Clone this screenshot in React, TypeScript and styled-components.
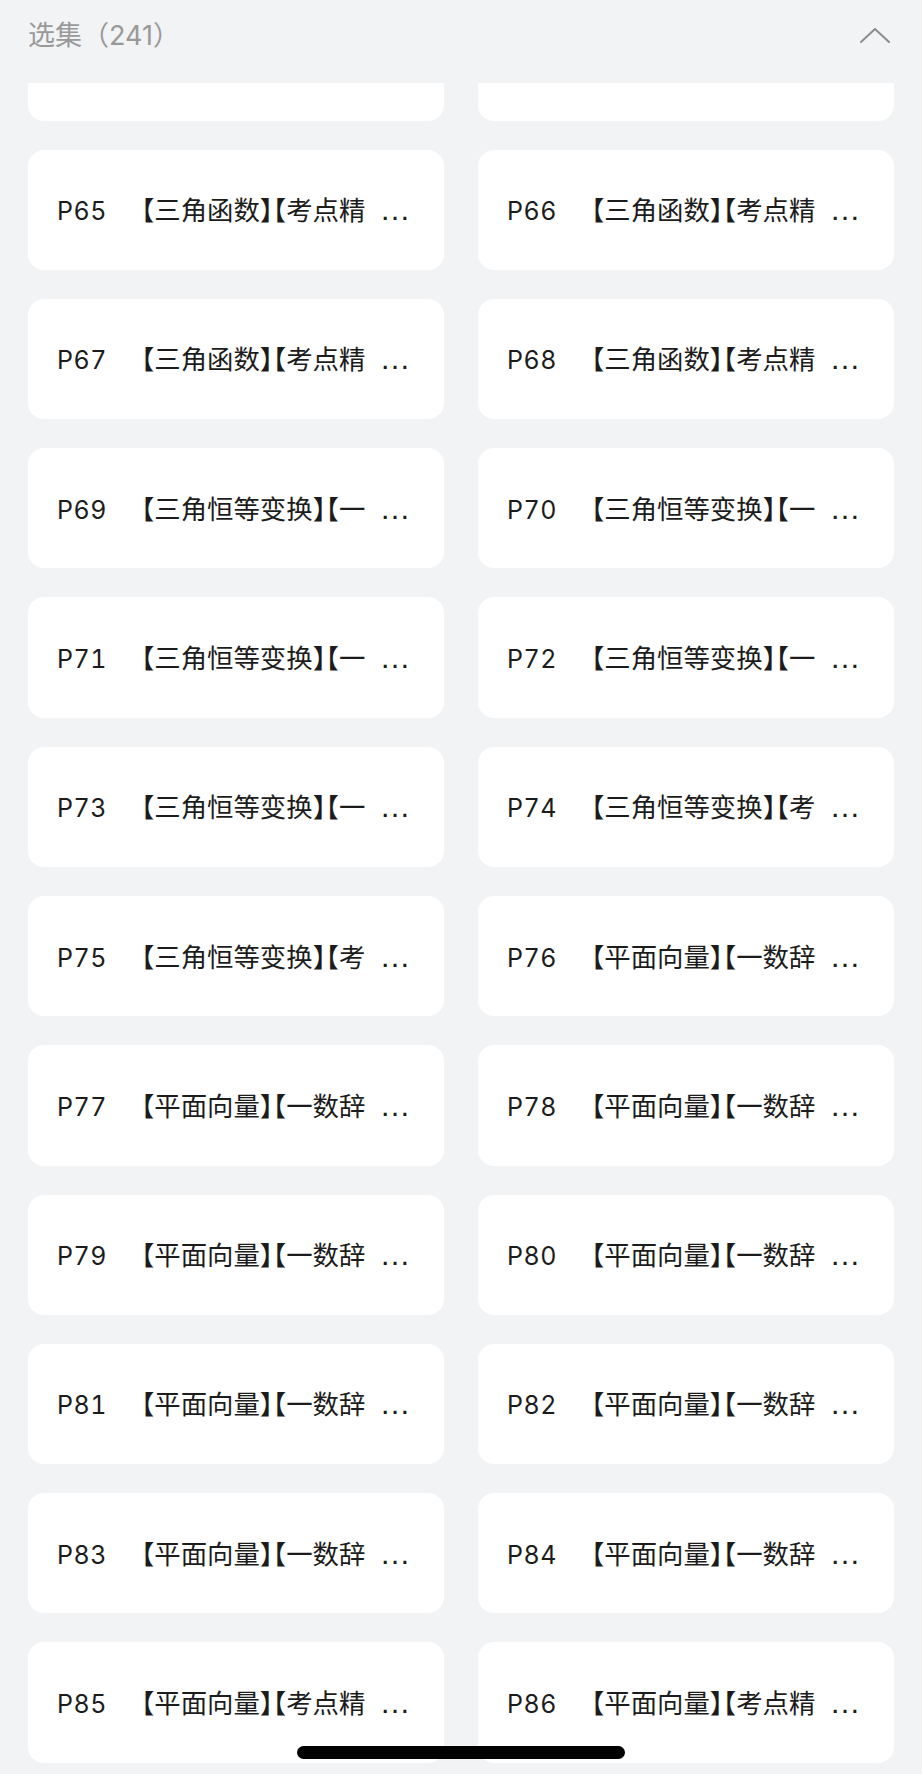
import React from "react";
import styled, { createGlobalStyle } from "styled-components";

const GlobalStyle = createGlobalStyle`
  html, body {
    margin: 0;
    padding: 0;
    background: #f2f3f5;
    overflow: hidden;
  }
  body {
    font-family: "Inter", "Noto Sans CJK SC", sans-serif;
    -webkit-font-smoothing: antialiased;
  }
`;

const Page = styled.div`
  width: 922px;
  height: 1774px;
  background: #f2f3f5;
  display: flex;
  flex-direction: column;
  overflow: hidden;
`;

const Header = styled.header`
  flex: none;
  height: 83px;
  box-sizing: border-box;
  padding: 0 32px 13px 28px;
  display: flex;
  align-items: center;
  justify-content: space-between;
`;

const HeaderTitle = styled.h2`
  margin: 0;
  font-size: 27px;
  font-weight: 400;
  color: #999999;
  line-height: 1;
`;

const CollapseButton = styled.button`
  border: 0;
  padding: 0;
  background: none;
  width: 30px;
  height: 15px;
  display: flex;
  color: #8c8c8c;
  cursor: pointer;
`;

const Grid = styled.div`
  display: grid;
  grid-template-columns: 1fr 1fr;
  column-gap: 34px;
  row-gap: 29px;
  padding: 0 28px;
`;

const Card = styled.div<{ $tail?: boolean }>`
  height: ${(p) => (p.$tail ? "37.5px" : "120.3px")};
  background: #ffffff;
  border-radius: ${(p) => (p.$tail ? "0 0 16px 16px" : "16px")};
  box-sizing: border-box;
  padding: 0 28px 0 29px;
  display: flex;
  align-items: center;
  overflow: hidden;
`;

const Line = styled.div`
  display: flex;
  align-items: baseline;
  white-space: nowrap;
  color: #1c1c1c;
  line-height: 1.2;
`;

const Num = styled.span`
  flex: none;
  font-size: 25px;
  font-variant-numeric: tabular-nums;
  letter-spacing: 0.5px;
  margin-right: 21px;
`;

const Title = styled.span`
  font-family: "Noto Sans CJK SC", sans-serif;
  font-size: 26.4px;
`;

/* closing + opening bracket pair set at half width each */
const BracketPair = styled.span`
  font-feature-settings: "halt" 1;
`;

const Dots = styled.span`
  font-family: "Liberation Sans", sans-serif;
  font-size: 31px;
  margin-left: 14px;
`;

const HomeIndicator = styled.div`
  position: fixed;
  left: 50%;
  bottom: 15px;
  width: 328px;
  height: 13px;
  margin-left: -164px;
  border-radius: 7px;
  background: #000000;
`;

type Episode = { no: number; title: string };

const titles: Record<number, string> = {
  65: "【三角函数】【考点精",
  66: "【三角函数】【考点精",
  67: "【三角函数】【考点精",
  68: "【三角函数】【考点精",
  69: "【三角恒等变换】【一",
  70: "【三角恒等变换】【一",
  71: "【三角恒等变换】【一",
  72: "【三角恒等变换】【一",
  73: "【三角恒等变换】【一",
  74: "【三角恒等变换】【考",
  75: "【三角恒等变换】【考",
  76: "【平面向量】【一数辞",
  77: "【平面向量】【一数辞",
  78: "【平面向量】【一数辞",
  79: "【平面向量】【一数辞",
  80: "【平面向量】【一数辞",
  81: "【平面向量】【一数辞",
  82: "【平面向量】【一数辞",
  83: "【平面向量】【一数辞",
  84: "【平面向量】【一数辞",
  85: "【平面向量】【考点精",
  86: "【平面向量】【考点精",
};

const episodes: Episode[] = Object.keys(titles).map((k) => ({
  no: Number(k),
  title: titles[Number(k)],
}));

function renderTitle(text: string) {
  const parts = text.split("】【");
  return parts.map((part, i) => (
    <React.Fragment key={i}>
      {part}
      {i < parts.length - 1 && <BracketPair>】【</BracketPair>}
    </React.Fragment>
  ));
}

function ChevronUp() {
  return (
    <svg width="30" height="15" viewBox="0 0 30 15" fill="none">
      <polyline
        points="1,14 15,1 29,14"
        stroke="currentColor"
        strokeWidth="2"
        strokeLinecap="round"
        strokeLinejoin="round"
      />
    </svg>
  );
}

export default function App() {
  return (
    <>
      <GlobalStyle />
      <Page>
        <Header>
          <HeaderTitle>选集（241）</HeaderTitle>
          <CollapseButton aria-label="收起">
            <ChevronUp />
          </CollapseButton>
        </Header>
        <Grid>
          <Card $tail />
          <Card $tail />
          {episodes.map((ep) => (
            <Card key={ep.no}>
              <Line>
                <Num>P{ep.no}</Num>
                <Title>{renderTitle(ep.title)}</Title>
                <Dots>…</Dots>
              </Line>
            </Card>
          ))}
        </Grid>
      </Page>
      <HomeIndicator />
    </>
  );
}
